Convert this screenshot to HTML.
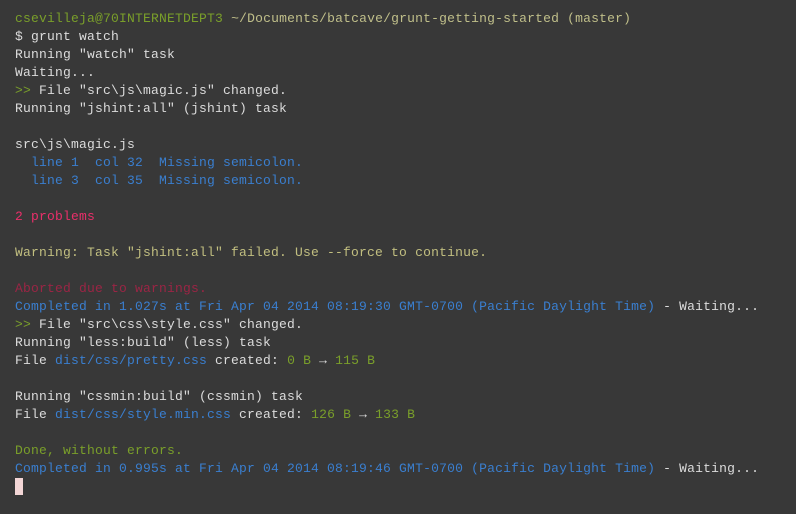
<!DOCTYPE html>
<html><head><meta charset="utf-8"><style>
html,body{margin:0;padding:0;background:#383838;}
body{width:796px;height:514px;overflow:hidden;}
pre{margin:0;padding:10px 0 0 15px;font-family:"Liberation Mono","DejaVu Sans Mono",monospace;font-size:13px;letter-spacing:0.2px;line-height:18px;color:#dcdcdc;}
.g{color:#7a9f2a}.y{color:#c0bf8a}.b{color:#3a7fd0}.r{color:#ea2f6a}.dr{color:#9b2545}.w{color:#c2bf80}
.cur{display:inline-block;width:8px;height:17px;background:#f3d6d6;vertical-align:-4px}
</style></head><body><pre><span class="g">csevilleja@70INTERNETDEPT3</span> <span class="y">~/Documents/batcave/grunt-getting-started (master)</span>
$ grunt watch
Running "watch" task
Waiting...
<span class="g">&gt;&gt;</span> File "src\js\magic.js" changed.
Running "jshint:all" (jshint) task

src\js\magic.js
  <span class="b">line 1  col 32  Missing semicolon.</span>
  <span class="b">line 3  col 35  Missing semicolon.</span>

<span class="r">2 problems</span>

<span class="w">Warning: Task "jshint:all" failed. Use --force to continue.</span>

<span class="dr">Aborted due to warnings.</span>
<span class="b">Completed in 1.027s at Fri Apr 04 2014 08:19:30 GMT-0700 (Pacific Daylight Time)</span> - Waiting...
<span class="g">&gt;&gt;</span> File "src\css\style.css" changed.
Running "less:build" (less) task
File <span class="b">dist/css/pretty.css</span> created: <span class="g">0 B</span> → <span class="g">115 B</span>

Running "cssmin:build" (cssmin) task
File <span class="b">dist/css/style.min.css</span> created: <span class="g">126 B</span> → <span class="g">133 B</span>

<span class="g">Done, without errors.</span>
<span class="b">Completed in 0.995s at Fri Apr 04 2014 08:19:46 GMT-0700 (Pacific Daylight Time)</span> - Waiting...
<span class="cur"></span></pre></body></html>
